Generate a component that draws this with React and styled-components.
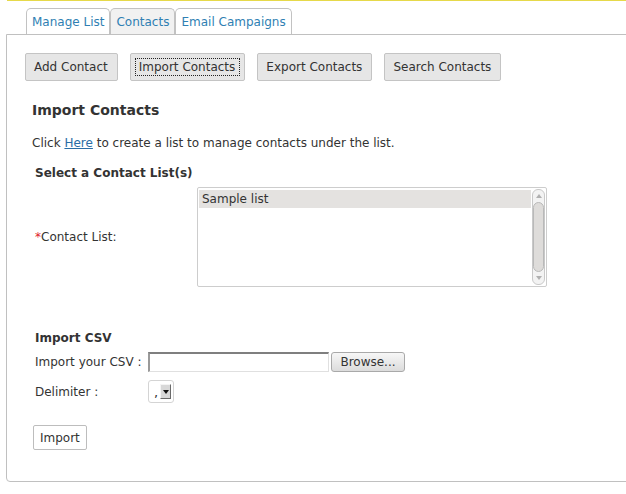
import React from "react";
import styled, { createGlobalStyle } from "styled-components";

const Global = createGlobalStyle`
  html, body { margin: 0; padding: 0; background: #fff; }
  body { font-family: "DejaVu Sans", Verdana, sans-serif; font-size: 12px; color: #333; }
`;

const Page = styled.div`
  width: 626px;
  height: 494px;
  overflow: hidden;
`;

const TopRule = styled.div`
  margin-left: 7px;
  height: 1px;
  background: #e6d94a;
`;

const Tabs = styled.div`
  display: flex;
  margin: 7px 0 0 26px;
  height: 26px;
`;

const Tab = styled.div`
  box-sizing: border-box;
  height: 26px;
  padding: 0 5px;
  border: 1px solid #c2c2c2;
  border-bottom: none;
  border-radius: 5px 5px 0 0;
  background: ${(p) => (p.$active ? "#f1f1f1" : "#fff")};
  color: #2f7fb3;
  font-size: 12px;
  line-height: 26px;
`;

const Panel = styled.div`
  box-sizing: border-box;
  margin-left: 6px;
  width: 640px;
  height: 448px;
  border: 1px solid #c0c0c0;
  border-radius: 0 0 0 4px;
  padding: 18px 0 0 18px;
`;

const ButtonBar = styled.div`
  display: flex;
  gap: 12px;
`;

const ActionButton = styled.div`
  box-sizing: border-box;
  height: 28px;
  padding: 0 9px 0 8px;
  background: #e6e6e6;
  border: 1px solid #c4c4c4;
  border-radius: 2px;
  line-height: 27px;
  color: #333;
  outline: ${(p) => (p.$focused ? "1px dotted #222" : "none")};
  outline-offset: -6px;
`;

const Section = styled.div`
  margin-left: 7px;
`;

const Title = styled.div`
  margin-top: 20px;
  font-size: 14px;
  font-weight: bold;
  line-height: 19px;
`;

const Intro = styled.div`
  margin-top: 14px;
  line-height: 18px;
`;

const Link = styled.a`
  color: #2a6da5;
  text-decoration: underline;
`;

const SubHeading = styled.div`
  margin-top: ${(p) => p.$top}px;
  margin-left: 3px;
  font-weight: bold;
  line-height: 18px;
`;

const ListRow = styled.div`
  display: grid;
  grid-template-columns: 162px 350px;
  align-items: center;
  margin-top: 5px;
  margin-left: 3px;
`;

const Label = styled.div`
  line-height: 18px;
  white-space: nowrap;
`;

const Req = styled.span`
  color: #e0202a;
`;

const ListBox = styled.div`
  box-sizing: border-box;
  height: 100px;
  border: 1px solid #cdcdcd;
  border-radius: 2px;
  display: flex;
  padding: 2px 0 0 1px;
`;

const Options = styled.div`
  flex: 1;
`;

const Option = styled.div`
  height: 18px;
  line-height: 19px;
  padding-left: 3px;
  background: ${(p) => (p.$selected ? "#e4e2e0" : "transparent")};
`;

const Scroll = styled.div`
  width: 13px;
  margin: -1px 1px 1px 1px;
  box-sizing: border-box;
  border: 1px solid #c9c9c9;
  border-radius: 6px;
  background: #f3f3f3;
  display: flex;
  flex-direction: column;
  align-items: center;
`;

const Arrow = styled.div`
  height: 12px;
  display: flex;
  align-items: center;
  justify-content: center;
`;

const Thumb = styled.div`
  flex: 1;
  width: 11px;
  box-sizing: border-box;
  border: 1px solid #b9b9b9;
  border-radius: 6px;
  background: #dedcda;
`;

const FieldRow = styled.div`
  display: grid;
  grid-template-columns: 113px auto;
  align-items: center;
  justify-content: start;
  margin-top: ${(p) => p.$top}px;
  margin-left: 3px;
`;

const FileWrap = styled.div`
  display: flex;
  gap: 2px;
`;

const FileBox = styled.div`
  box-sizing: border-box;
  width: 181px;
  height: 20px;
  border: 1px solid #e0e0e0;
  border-top: 2px solid #7f7f7f;
  border-left: 2px solid #9a9a9a;
  background: #fff;
`;

const Browse = styled.div`
  box-sizing: border-box;
  width: 74px;
  height: 20px;
  border: 1px solid #a9a9a9;
  border-radius: 3px;
  background: linear-gradient(#f7f7f7, #dcdcdc);
  line-height: 18px;
  text-align: center;
  font-size: 12px;
`;

const Select = styled.div`
  box-sizing: border-box;
  width: 26px;
  height: 23px;
  border: 1px solid #d4d4d4;
  border-radius: 3px;
  display: flex;
  align-items: center;
  padding: 0 2px 0 5px;
  gap: 2px;
`;

const Comma = styled.span`
  font-size: 13px;
  line-height: 13px;
  margin-top: 2px;
`;

const DropBtn = styled.div`
  box-sizing: border-box;
  width: 12px;
  height: 15px;
  background: #d8d8d8;
  border: 1px solid;
  border-color: #f4f4f4 #6a6a6a #6a6a6a #f4f4f4;
  display: flex;
  align-items: center;
  justify-content: center;
`;

const SubmitButton = styled.div`
  display: inline-block;
  box-sizing: border-box;
  margin-top: 22px;
  margin-left: 1px;
  height: 25px;
  padding: 0 6px;
  border: 1px solid #bdbdbd;
  border-radius: 2px;
  background: #fff;
  line-height: 24px;
`;

export default function App() {
  return (
    <Page>
      <Global />
      <TopRule />
      <Tabs>
        <Tab>Manage List</Tab>
        <Tab $active>Contacts</Tab>
        <Tab>Email Campaigns</Tab>
      </Tabs>
      <Panel>
        <ButtonBar>
          <ActionButton>Add Contact</ActionButton>
          <ActionButton $focused>Import Contacts</ActionButton>
          <ActionButton>Export Contacts</ActionButton>
          <ActionButton>Search Contacts</ActionButton>
        </ButtonBar>
        <Section>
          <Title>Import Contacts</Title>
          <Intro>
            Click <Link>Here</Link> to create a list to manage contacts under the list.
          </Intro>
          <SubHeading $top={12}>Select a Contact List(s)</SubHeading>
          <ListRow>
            <Label>
              <Req>*</Req>Contact List:
            </Label>
            <ListBox>
              <Options>
                <Option $selected>Sample list</Option>
              </Options>
              <Scroll>
                <Arrow>
                  <svg width="6" height="4" viewBox="0 0 6 4">
                    <path d="M0 4 L3 0 L6 4 Z" fill="#b0b0b0" />
                  </svg>
                </Arrow>
                <Thumb />
                <Arrow>
                  <svg width="6" height="4" viewBox="0 0 6 4">
                    <path d="M0 0 L3 4 L6 0 Z" fill="#b0b0b0" />
                  </svg>
                </Arrow>
              </Scroll>
            </ListBox>
          </ListRow>
          <SubHeading $top={42}>Import CSV</SubHeading>
          <FieldRow $top={5}>
            <Label>Import your CSV :</Label>
            <FileWrap>
              <FileBox />
              <Browse>Browse...</Browse>
            </FileWrap>
          </FieldRow>
          <FieldRow $top={8}>
            <Label>Delimiter :</Label>
            <Select>
              <Comma>,</Comma>
              <DropBtn>
                <svg width="6" height="4" viewBox="0 0 6 4">
                  <path d="M0 0 L3 4 L6 0 Z" fill="#111" />
                </svg>
              </DropBtn>
            </Select>
          </FieldRow>
          <SubmitButton>Import</SubmitButton>
        </Section>
      </Panel>
    </Page>
  );
}
